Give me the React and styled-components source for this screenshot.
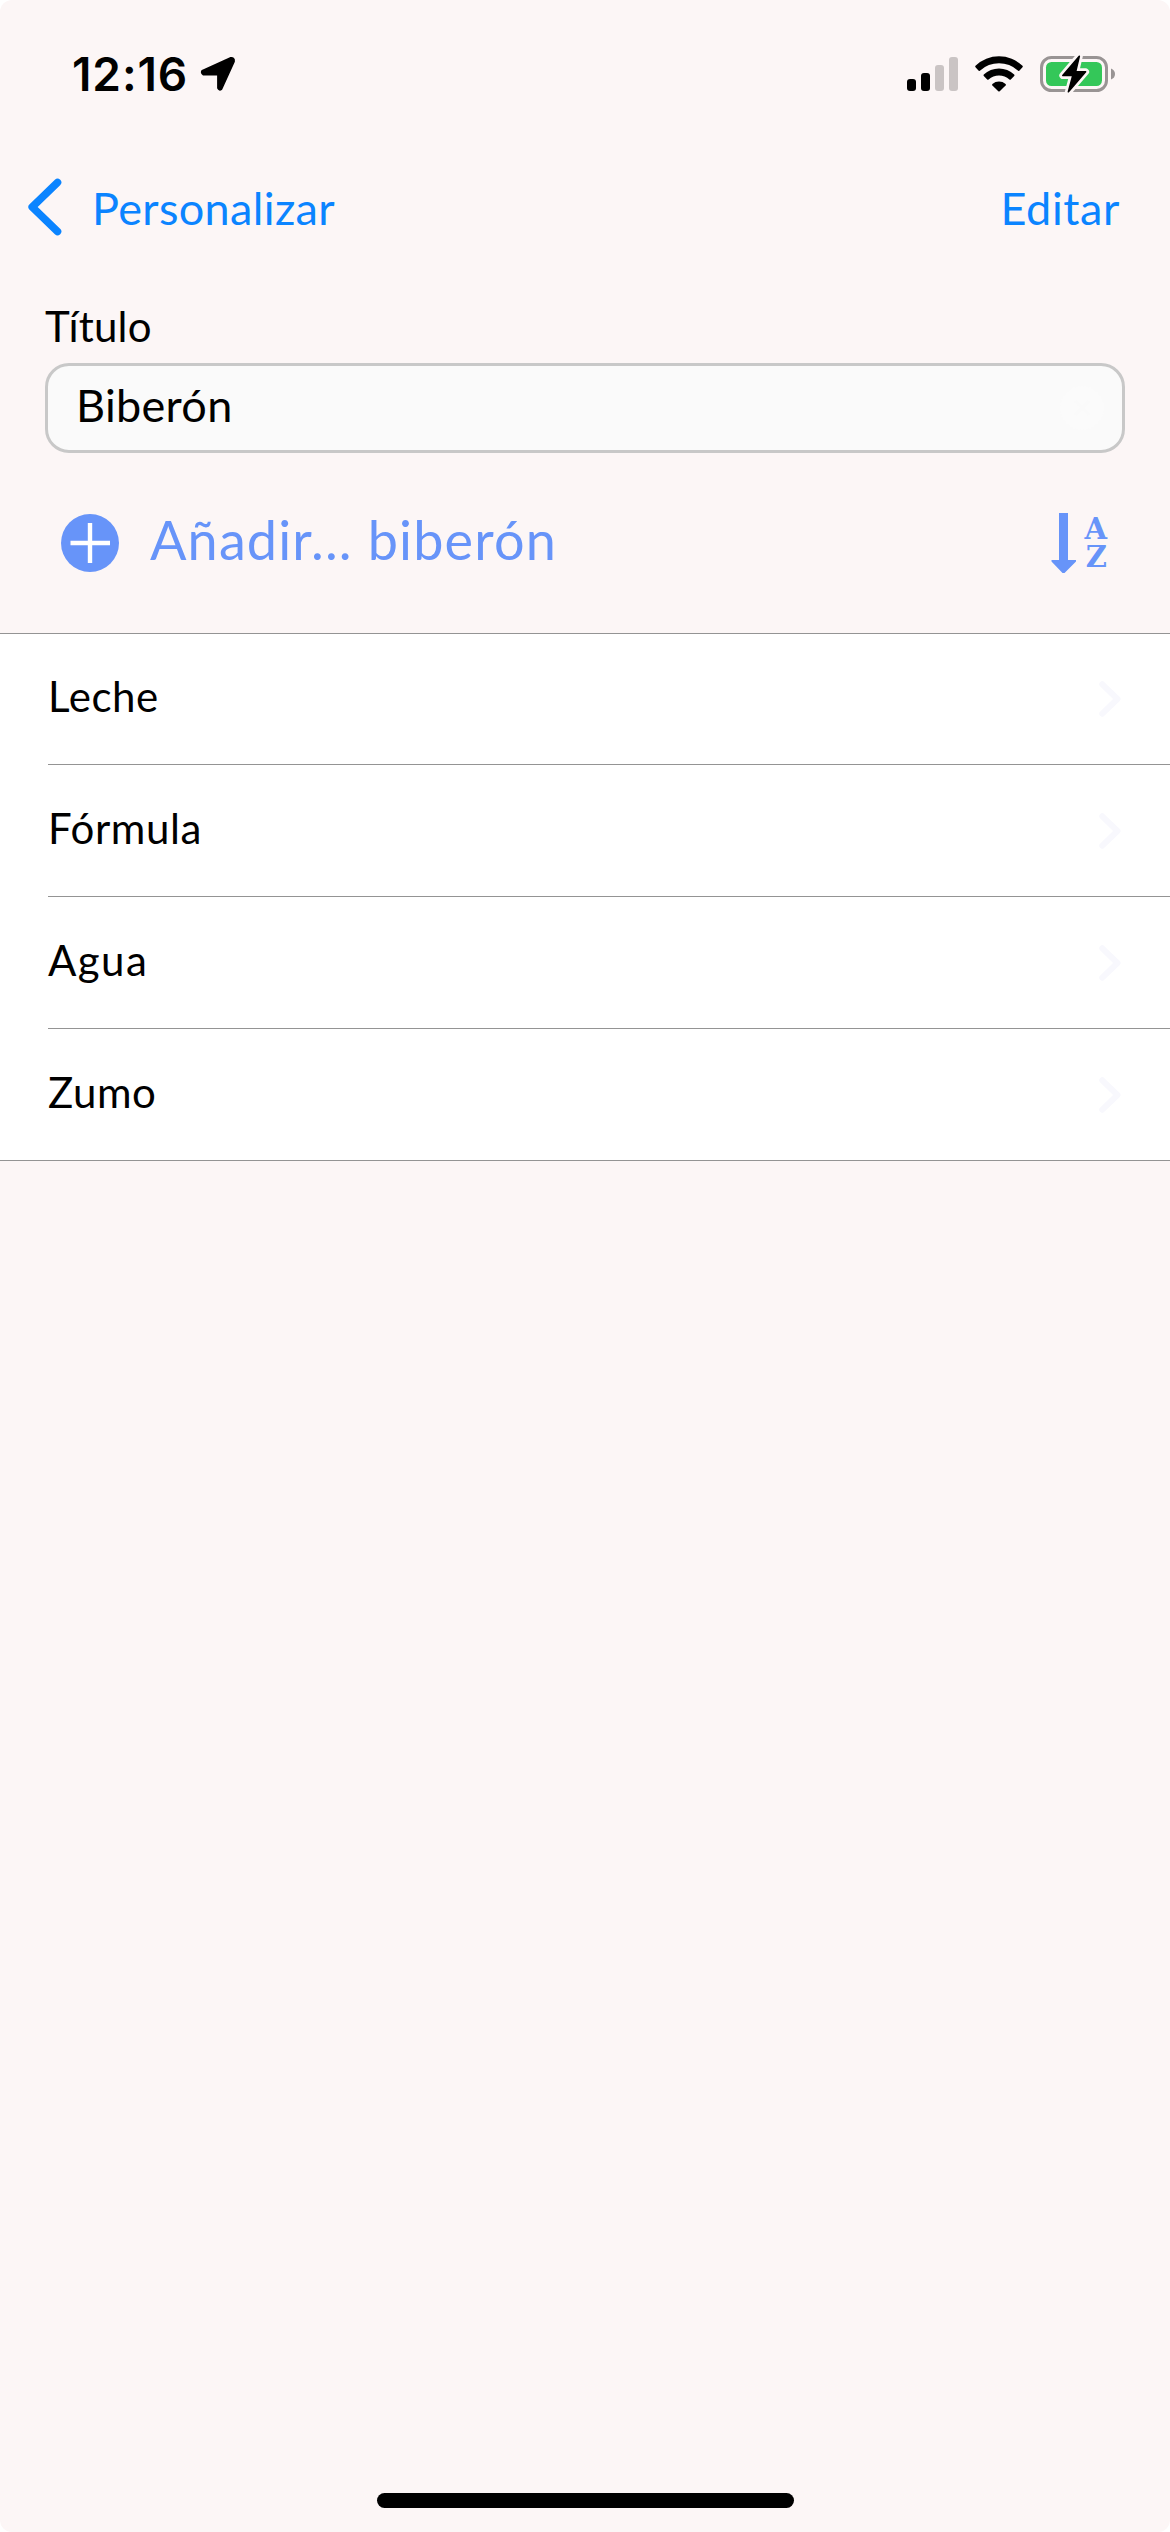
import React, { useState } from 'react';
import styled, { createGlobalStyle } from 'styled-components';

const GlobalStyle = createGlobalStyle`
  * {
    box-sizing: border-box;
  }

  body {
    margin: 0;
    background-color: #ffffff;
    font-family: Lato, "Open Sans", sans-serif;
  }
`;

const Screen = styled.div`
  display: flex;
  flex-direction: column;
  width: 1170px;
  height: 2532px;
  overflow: hidden;
  border-radius: 12px;
  background-color: #fcf6f6;
`;

const StatusBar = styled.header`
  display: flex;
  justify-content: space-between;
  align-items: center;
  height: 141px;
  padding: 7px 54px 0 72px;
`;

const StatusGroup = styled.div`
  display: flex;
  align-items: center;
  gap: ${(props) => props.$gap};
`;

const Clock = styled.span`
  font-family: Inter, sans-serif;
  font-size: 46px;
  font-weight: 600;
  line-height: 56px;
  letter-spacing: 0.9px;
`;

const NavBar = styled.nav`
  display: flex;
  justify-content: space-between;
  align-items: center;
  height: 132px;
  padding: 0 50px 0 27px;
`;

const NavButton = styled.button`
  display: flex;
  align-items: center;
  gap: 29px;
  padding: 0;
  border: none;
  background: none;
  color: #0b84ff;
  font-family: inherit;
  cursor: pointer;
`;

const NavText = styled.span`
  padding-top: 2px;
  font-size: 45px;
  line-height: 54px;
  letter-spacing: ${(props) => props.$spacing};
`;

const TitleForm = styled.div`
  display: flex;
  flex-direction: column;
  gap: 12px;
  padding: 28px 45px 0;
`;

const Label = styled.label`
  font-size: 42px;
  line-height: 50px;
  letter-spacing: 0.2px;
`;

const Field = styled.div`
  display: flex;
  align-items: center;
  height: 90px;
  padding: 0 18px 0 28px;
  border: 3px solid #c8c8c8;
  border-radius: 24px;
  background-color: #fafafa;
`;

const TitleInput = styled.input`
  flex: 1;
  min-width: 0;
  height: 84px;
  padding: 0 0 7px;
  border: none;
  outline: none;
  background: none;
  color: #000000;
  font-family: inherit;
  font-size: 45px;
  letter-spacing: 0.3px;
`;

const Toolbar = styled.div`
  display: flex;
  justify-content: space-between;
  align-items: center;
  height: 180px;
  padding: 0 63px 0 61px;
`;

const AddButton = styled.button`
  display: flex;
  align-items: center;
  gap: 31px;
  padding: 0;
  border: none;
  background: none;
  color: #6794f9;
  font-family: inherit;
  cursor: pointer;
`;

const AddText = styled.span`
  padding-bottom: 7px;
  font-size: 54px;
  line-height: 65px;
  letter-spacing: 1.15px;
`;

const SortButton = styled.button`
  display: flex;
  align-items: center;
  gap: 7px;
  padding: 0;
  border: none;
  background: none;
  color: #6794f9;
  cursor: pointer;
`;

const SortLetters = styled.span`
  font-family: "DejaVu Serif", serif;
  font-size: 29px;
  font-weight: 700;
  line-height: 28px;
  text-align: right;
`;

const List = styled.ul`
  margin: 0;
  padding: 0 0 0 48px;
  border-top: 1px solid #949494;
  border-bottom: 1px solid #949494;
  background-color: #ffffff;
  list-style: none;
`;

const ListRow = styled.li`
  display: flex;
  justify-content: space-between;
  align-items: center;
  height: 132px;
  padding-right: 49px;
  border-bottom: 1px solid #949494;

  &:first-child {
    height: 131px;
  }

  &:last-child {
    height: 131px;
    border-bottom: none;
  }
`;

const RowText = styled.span`
  padding-bottom: 6px;
  font-size: 42px;
  line-height: 50px;
  letter-spacing: ${(props) => props.$spacing};
`;

const BottomBar = styled.footer`
  display: flex;
  justify-content: center;
  margin-top: auto;
  padding-bottom: 24px;
`;

const HomeIndicator = styled.div`
  width: 417px;
  height: 15px;
  border-radius: 8px;
  background-color: #000000;
`;

const LocationIcon = () => (
  <svg width="36" height="36" viewBox="0 0 36 36">
    <path
      d="M3 15 L30.5 2.6 Q34 2 33.4 5.4 L21 32.6 Q19.5 34 18.6 32 V18 H3.6 Q1.4 16.4 3 15 Z"
      fill="#000"
      stroke="#000"
      strokeWidth="3"
      strokeLinejoin="round"
    />
  </svg>
);

const SignalIcon = () => (
  <svg width="51" height="36" viewBox="0 0 51 36">
    <rect x="0" y="23" width="9" height="12" rx="3" />
    <rect x="14" y="17" width="9" height="18" rx="3" />
    <rect x="28" y="9" width="9" height="26" rx="3" fill="#cac4c4" />
    <rect x="42" y="1" width="9" height="34" rx="3" fill="#cac4c4" />
  </svg>
);

const WifiIcon = () => (
  <svg width="48" height="36" viewBox="0 0 48 36">
    <path d="M0.5 9.8 A34 34 0 0 1 47.5 9.8 Q48.2 10.6 47.5 11.3 L44.3 14.7 Q43.5 15.3 42.8 14.6 A27.500 27.500 0 0 0 5.2 14.6 Q4.5 15.3 3.7 14.7 L0.5 11.3 Q-0.2 10.6 0.5 9.8 Z" />
    <path d="M8.8 18.6 A22 22 0 0 1 39.2 18.6 Q39.9 19.3 39.2 20.1 L35.8 23.4 Q35.1 24 34.4 23.4 A15.5 15.5 0 0 0 13.6 23.4 Q12.9 24 12.2 23.4 L8.8 20.1 Q8.1 19.3 8.8 18.6 Z" />
    <path d="M17.4 27.9 A10.5 10.5 0 0 1 30.6 27.9 Q31.3 28.6 30.6 29.4 L24.7 35.2 Q24 35.8 23.3 35.2 L17.4 29.4 Q16.7 28.6 17.4 27.9 Z" />
  </svg>
);

const BatteryIcon = () => (
  <svg width="76" height="38" viewBox="0 0 76 38">
    <rect x="1.5" y="2.5" width="65" height="33" rx="10" fill="none" stroke="#999494" strokeWidth="3" />
    <path d="M71 13.5 Q75 15 75 19 Q75 23 71 24.5 Z" fill="#999494" />
    <rect x="6" y="7" width="56" height="24" rx="5.5" fill="#34c759" />
    <path
      d="M39.3 1.2 L22.8 20.5 H32.8 L28.4 36.8 L45.6 16.8 H35.6 Z"
      fill="#fcf6f6"
      stroke="#fcf6f6"
      strokeWidth="7"
      strokeLinejoin="round"
    />
    <path
      d="M39.3 1.2 L22.8 20.5 H32.8 L28.4 36.8 L45.6 16.8 H35.6 Z"
      stroke="#000"
      strokeWidth="1.6"
      strokeLinejoin="round"
    />
  </svg>
);

const BackIcon = () => (
  <svg width="36" height="60" viewBox="0 0 36 60">
    <path
      d="M30.5 5.5 L5.2 30 L30.5 54.5"
      fill="none"
      stroke="currentColor"
      strokeWidth="7.6"
      strokeLinecap="round"
      strokeLinejoin="round"
    />
  </svg>
);

const PlusIcon = () => (
  <svg width="58" height="58" viewBox="0 0 58 58">
    <circle cx="29" cy="29" r="29" fill="currentColor" />
    <path d="M29 9 V49 M9.5 29 H49" stroke="#fff" strokeWidth="4.4" />
  </svg>
);

const ClearIcon = () => (
  <svg width="44" height="44" viewBox="0 0 44 44">
    <circle cx="22" cy="22" r="22" fill="#fbfbfb" />
    <path d="M15 15 L29 29 M29 15 L15 29" stroke="#fafafa" strokeWidth="3" />
  </svg>
);

const ArrowDownIcon = () => (
  <svg width="26" height="62" viewBox="0 0 26 62">
    <path d="M8 1 H17 V48 H25 V49.5 L13.5 61 H11.5 L0.5 49.5 V48 H8 Z" fill="currentColor" />
  </svg>
);

const ChevronIcon = () => (
  <svg width="22" height="36" viewBox="0 0 22 36">
    <path
      d="M3.3 3.3 L18.5 18 L3.3 32.7"
      fill="none"
      stroke="#f8f8fd"
      strokeWidth="6"
      strokeLinecap="round"
      strokeLinejoin="round"
    />
  </svg>
);

const items = [
  { name: 'Leche', spacing: '0.6px' },
  { name: 'Fórmula', spacing: '0.6px' },
  { name: 'Agua', spacing: '1.4px' },
  { name: 'Zumo', spacing: '0.6px' },
];

const App = () => {
  const [title, setTitle] = useState('Biberón');

  return (
    <>
      <GlobalStyle />
      <Screen>
        <StatusBar>
          <StatusGroup $gap="12px">
            <Clock>12:16</Clock>
            <LocationIcon />
          </StatusGroup>
          <StatusGroup $gap="17px">
            <SignalIcon />
            <WifiIcon />
            <BatteryIcon />
          </StatusGroup>
        </StatusBar>

        <NavBar>
          <NavButton>
            <BackIcon />
            <NavText $spacing="0.35px">Personalizar</NavText>
          </NavButton>
          <NavButton>
            <NavText $spacing="0.6px">Editar</NavText>
          </NavButton>
        </NavBar>

        <TitleForm>
          <Label htmlFor="title">Título</Label>
          <Field>
            <TitleInput id="title" value={title} spellCheck={false} onChange={(e) => setTitle(e.target.value)} />
            <ClearIcon />
          </Field>
        </TitleForm>

        <Toolbar>
          <AddButton>
            <PlusIcon />
            <AddText>Añadir... biberón</AddText>
          </AddButton>
          <SortButton>
            <ArrowDownIcon />
            <SortLetters>
              A<br />Z
            </SortLetters>
          </SortButton>
        </Toolbar>

        <List>
          {items.map((item) => (
            <ListRow key={item.name}>
              <RowText $spacing={item.spacing}>{item.name}</RowText>
              <ChevronIcon />
            </ListRow>
          ))}
        </List>

        <BottomBar>
          <HomeIndicator />
        </BottomBar>
      </Screen>
    </>
  );
};

export default App;
